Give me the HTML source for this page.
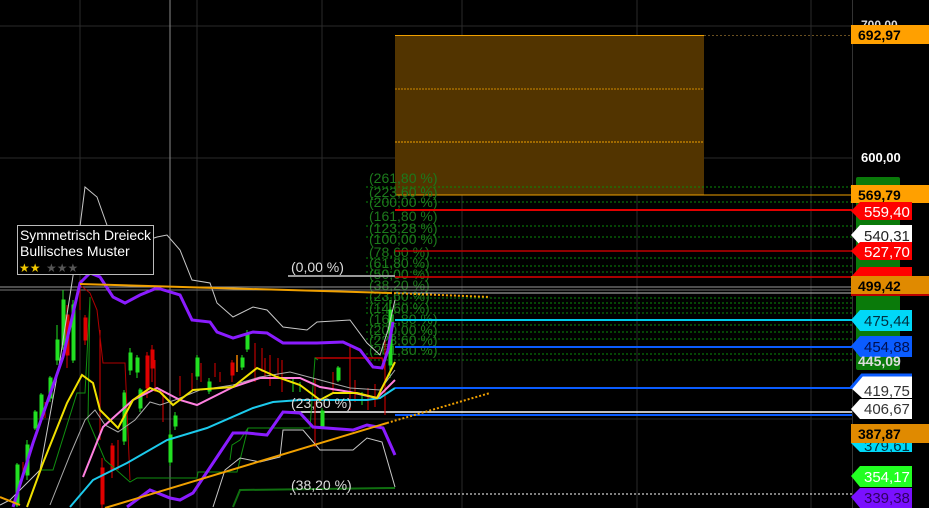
<!DOCTYPE html>
<html><head><meta charset="utf-8"><style>
html,body{margin:0;padding:0;background:#000;overflow:hidden}
svg{display:block}
text{font-family:"Liberation Sans",sans-serif}
</style></head><body>
<svg width="929" height="508" viewBox="0 0 929 508" xmlns="http://www.w3.org/2000/svg">
<rect width="929" height="508" fill="#000"/>
<g stroke="#2a2a2a" stroke-width="1">
<line x1="80" y1="0" x2="80" y2="508"/><line x1="197" y1="0" x2="197" y2="508"/>
<line x1="322" y1="0" x2="322" y2="508"/><line x1="462" y1="0" x2="462" y2="508"/>
<line x1="637" y1="0" x2="637" y2="508"/><line x1="811" y1="0" x2="811" y2="508"/>
<line x1="0" y1="26" x2="852" y2="26"/><line x1="0" y1="158" x2="852" y2="158"/>
<line x1="0" y1="419" x2="852" y2="419"/>
</g>
<line x1="170" y1="0" x2="170" y2="508" stroke="#8a8a8a"/>
<line x1="852.5" y1="0" x2="852.5" y2="508" stroke="#333"/>
<rect x="395" y="35" width="309" height="160" fill="#523400"/>
<line x1="395" y1="35.5" x2="704" y2="35.5" stroke="#f0a000"/>
<line x1="704" y1="35.5" x2="852" y2="35.5" stroke="#6a5020" stroke-dasharray="2,2"/>
<line x1="395" y1="89" x2="704" y2="89" stroke="#d08a00" stroke-dasharray="2,1"/>
<line x1="395" y1="142" x2="704" y2="142" stroke="#f0a000" stroke-dasharray="2,1"/>
<line x1="395" y1="195" x2="852" y2="195" stroke="#f0a000" stroke-width="1"/>
<g stroke="#0a8a0a" stroke-dasharray="2,2">
<line x1="366" y1="187" x2="852" y2="187"/><line x1="366" y1="202" x2="852" y2="202"/>
<line x1="366" y1="226" x2="852" y2="226"/><line x1="366" y1="237" x2="852" y2="237"/>
<line x1="366" y1="258" x2="852" y2="258"/><line x1="366" y1="266" x2="852" y2="266"/>
<line x1="366" y1="272" x2="852" y2="272"/><line x1="366" y1="298" x2="852" y2="298"/>
<line x1="366" y1="303" x2="852" y2="303"/><line x1="366" y1="308" x2="852" y2="308"/>
<line x1="366" y1="313" x2="852" y2="313"/><line x1="366" y1="325" x2="852" y2="325"/>
<line x1="366" y1="332" x2="852" y2="332"/><line x1="366" y1="339" x2="852" y2="339"/>
<line x1="366" y1="354" x2="852" y2="354"/><line x1="366" y1="360" x2="852" y2="360"/>
</g>
<g font-size="14" fill="#1c7a1c">
<text x="369" y="183">(261,80 %)</text><text x="369" y="197">(223,60 %)</text>
<text x="369" y="207">(200,00 %)</text><text x="369" y="221">(161,80 %)</text>
<text x="369" y="233">(123,28 %)</text><text x="369" y="244">(100,00 %)</text>
<text x="369" y="257">(78,60 %)</text><text x="369" y="268">(61,80 %)</text>
<text x="369" y="279">(50,00 %)</text><text x="369" y="290">(38,20 %)</text>
<text x="369" y="301">(23,60 %)</text><text x="369" y="313">(14,60 %)</text>
<text x="369" y="324">(161,80 %)</text><text x="369" y="335">(200,00 %)</text>
<text x="369" y="345">(223,60 %)</text><text x="369" y="355">(261,80 %)</text>
</g>
<line x1="395" y1="210" x2="852" y2="210" stroke="#e00000" stroke-width="2"/>
<line x1="395" y1="251" x2="852" y2="251" stroke="#c00000" stroke-width="1.5"/>
<line x1="395" y1="277" x2="852" y2="277" stroke="#e00000" stroke-width="1.5"/>
<line x1="290" y1="276" x2="395" y2="276" stroke="#888" stroke-width="1"/>
<line x1="0" y1="287" x2="852" y2="287" stroke="#999" stroke-width="1"/>
<line x1="0" y1="290" x2="852" y2="290" stroke="#777" stroke-width="1"/>
<line x1="395" y1="293" x2="852" y2="293" stroke="#bbb" stroke-width="1"/>
<line x1="395" y1="320" x2="852" y2="320" stroke="#00c8e8" stroke-width="2"/>
<line x1="395" y1="347" x2="852" y2="347" stroke="#0a5cff" stroke-width="2"/>
<line x1="395" y1="388" x2="852" y2="388" stroke="#0a5cff" stroke-width="2"/>
<line x1="290" y1="412" x2="852" y2="412" stroke="#fff" stroke-width="1.5"/>
<line x1="395" y1="415" x2="852" y2="415" stroke="#0a5cff" stroke-width="2"/>
<line x1="290" y1="494" x2="852" y2="494" stroke="#fff" stroke-dasharray="2,2"/>
<line x1="288" y1="276" x2="395" y2="276" stroke="#999" stroke-width="2"/>
<g stroke-width="1">
<g stroke="#22e022" fill="#22e022">
<line x1="17" y1="463" x2="17" y2="507"/><rect x="16" y="465" width="3" height="40"/>
<line x1="27" y1="440" x2="27" y2="480"/><rect x="26" y="445" width="3" height="30"/>
<line x1="35" y1="410" x2="35" y2="430"/><rect x="34" y="412" width="3" height="16"/>
<line x1="41" y1="393" x2="41" y2="422"/><rect x="40" y="395" width="3" height="24"/>
<line x1="50" y1="376" x2="50" y2="402"/><rect x="49" y="378" width="3" height="20"/>
<line x1="57" y1="325" x2="57" y2="365"/><rect x="56" y="340" width="3" height="20"/>
<line x1="63" y1="290" x2="63" y2="350"/><rect x="62" y="300" width="3" height="45"/>
<line x1="73" y1="300" x2="73" y2="363"/><rect x="72" y="305" width="3" height="55"/>
<line x1="124" y1="390" x2="124" y2="445"/><rect x="123" y="393" width="3" height="48"/>
<line x1="130" y1="348" x2="130" y2="375"/><rect x="129" y="353" width="3" height="17"/>
<line x1="137" y1="355" x2="137" y2="378"/><rect x="136" y="358" width="3" height="14"/>
<line x1="140" y1="388" x2="140" y2="412"/><rect x="139" y="390" width="3" height="18"/>
<line x1="170" y1="430" x2="170" y2="466"/><rect x="169" y="435" width="3" height="27"/>
<line x1="175" y1="412" x2="175" y2="430"/><rect x="174" y="416" width="3" height="10"/>
<line x1="197" y1="355" x2="197" y2="380"/><rect x="196" y="358" width="3" height="18"/>
<line x1="209" y1="378" x2="209" y2="394"/><rect x="208" y="382" width="3" height="9"/>
<line x1="242" y1="355" x2="242" y2="370"/><rect x="241" y="358" width="3" height="9"/>
<line x1="247" y1="330" x2="247" y2="352"/><rect x="246" y="335" width="3" height="14"/>
<line x1="293" y1="378" x2="293" y2="392"/><line x1="300" y1="382" x2="300" y2="392"/>
<line x1="322" y1="408" x2="322" y2="428"/><rect x="321" y="411" width="3" height="15"/>
<line x1="338" y1="366" x2="338" y2="382"/><rect x="337" y="368" width="3" height="12"/>
<line x1="362" y1="392" x2="362" y2="405"/>
<line x1="390" y1="300" x2="390" y2="378"/><rect x="389" y="310" width="3" height="55"/>
</g>
<g stroke="#e00000" fill="#e00000">
<line x1="23" y1="462" x2="23" y2="478"/><line x1="45" y1="402" x2="45" y2="418"/>
<line x1="67" y1="305" x2="67" y2="368"/><rect x="66" y="315" width="3" height="40"/>
<line x1="80" y1="280" x2="80" y2="310"/><line x1="85" y1="315" x2="85" y2="345"/><rect x="84" y="318" width="3" height="22"/>
<line x1="100" y1="330" x2="100" y2="440"/>
<line x1="102" y1="458" x2="102" y2="508"/><rect x="101" y="468" width="3" height="36"/>
<line x1="112" y1="443" x2="112" y2="478"/><rect x="111" y="446" width="3" height="24"/>
<line x1="118" y1="440" x2="118" y2="470"/>
<line x1="147" y1="352" x2="147" y2="398"/><rect x="146" y="356" width="3" height="32"/>
<line x1="152" y1="345" x2="152" y2="382"/><rect x="151" y="350" width="3" height="18"/>
<line x1="155" y1="360" x2="155" y2="392"/><line x1="163" y1="390" x2="163" y2="422"/>
<line x1="180" y1="376" x2="180" y2="396"/><line x1="192" y1="373" x2="192" y2="390"/>
<line x1="201" y1="363" x2="201" y2="382"/><line x1="215" y1="363" x2="215" y2="377"/>
<line x1="220" y1="372" x2="220" y2="382"/>
<line x1="232" y1="360" x2="232" y2="382"/><rect x="231" y="363" width="3" height="12"/>
<line x1="255" y1="343" x2="255" y2="382"/><line x1="262" y1="348" x2="262" y2="372"/>
<line x1="265" y1="358" x2="265" y2="378"/><line x1="270" y1="355" x2="270" y2="386"/>
<line x1="278" y1="358" x2="278" y2="377"/><line x1="282" y1="360" x2="282" y2="392"/>
<line x1="315" y1="378" x2="315" y2="447"/><line x1="333" y1="372" x2="333" y2="392"/>
<line x1="350" y1="345" x2="350" y2="410"/><line x1="355" y1="380" x2="355" y2="402"/>
<line x1="368" y1="388" x2="368" y2="410"/><line x1="375" y1="384" x2="375" y2="407"/>
<line x1="385" y1="340" x2="385" y2="415"/>
</g>
<line x1="237" y1="355" x2="237" y2="372" stroke="#b06000" stroke-width="2"/>
</g>
<polyline fill="none" stroke="#b00000" stroke-width="1" points="80,285 90,293 97,310 103,363 125,363 130,480"/>
<polyline fill="none" stroke="#c00000" stroke-width="1.5" points="315,358 382,358 385,370"/>
<polyline fill="none" stroke="#109010" stroke-width="1" points="40,470 53,470 77,393 85,393 90,297 88,420 105,460 130,482 137,478 197,478 198,472 237,472 248,428 310,428 315,358 318,360"/>
<polyline fill="none" stroke="#107010" stroke-width="2" points="233,507 240,490 395,488"/>
<polyline fill="none" stroke="#109010" stroke-width="1" points="230,460 232,445 240,440 248,428"/>
<polyline fill="none" stroke="#c8c8c8" stroke-width="1" points="0,505 10,500 40,470 60,360 77,250 85,187 97,197 108,228 127,247 157,237 167,235 180,250 192,280 210,283 217,303 233,317 253,307 267,310 283,327 307,330 317,322 350,320 367,343 380,355 388,330 395,300"/>
<polyline fill="none" stroke="#aaa" stroke-width="1" points="50,505 70,455 85,420 95,410 105,425 118,432 135,420 150,402 160,405 175,400 200,390 233,385 260,377 290,372 320,380 350,388 380,390 395,370"/>
<polyline fill="none" stroke="#c8c8c8" stroke-width="1" points="213,507 225,470 240,458 260,462 280,457 283,430 303,430 320,450 353,450 367,438 382,442 395,487"/>
<polyline fill="none" stroke="#1ccaec" stroke-width="2" points="70,507 93,480 127,463 167,440 207,428 253,408 273,402 300,400 367,400 380,398 395,388"/>
<polyline fill="none" stroke="#ff80e0" stroke-width="2" points="83,477 103,427 133,400 157,388 180,400 197,405 233,387 260,378 300,378 320,387 350,392 377,398 395,380"/>
<polyline fill="none" stroke="#f0e000" stroke-width="2" points="27,507 43,463 67,403 82,375 93,383 100,410 118,428 133,400 150,388 160,392 173,405 193,390 233,387 257,368 277,377 300,385 320,400 333,393 357,393 377,398 395,362"/>
<polyline fill="none" stroke="#8a1cff" stroke-width="3" points="13,507 33,443 63,357 80,283 90,273 100,277 113,297 125,303 140,295 157,288 180,295 192,320 210,322 217,332 233,338 253,332 267,333 283,343 317,343 343,342 360,350 373,367 382,368 388,350 393,322"/>
<polyline fill="none" stroke="#8a1cff" stroke-width="3" points="127,507 150,490 170,498 180,500 193,493 213,463 233,433 247,433 267,435 283,412 300,413 313,427 353,430 367,425 383,428 395,455"/>
<line x1="80" y1="284" x2="390" y2="293" stroke="#f0a000" stroke-width="2"/>
<line x1="390" y1="293" x2="490" y2="297" stroke="#f0a000" stroke-width="2" stroke-dasharray="2,2"/>
<line x1="105" y1="508" x2="387" y2="423" stroke="#f0a000" stroke-width="2"/>
<line x1="387" y1="423" x2="490" y2="393" stroke="#f0a000" stroke-width="2" stroke-dasharray="2,2"/>
<line x1="0" y1="497" x2="20" y2="505" stroke="#f0a000" stroke-width="2"/>
<text x="291" y="272" font-size="14" fill="#ddd">(0,00 %)</text>
<text x="291" y="408" font-size="14" fill="#ddd">(23,60 %)</text>
<text x="291" y="490" font-size="14" fill="#ddd">(38,20 %)</text>
<rect x="17.5" y="225.5" width="136" height="49" fill="#000" stroke="#bbb"/>
<text x="20" y="240" font-size="14" fill="#fff" textLength="131">Symmetrisch Dreieck</text>
<text x="20" y="256" font-size="14" fill="#fff">Bullisches Muster</text>
<text x="19" y="272" font-size="12" fill="#f0c800">★★</text>
<text x="46" y="272" font-size="12" fill="#555">★★★</text>
<text x="861" y="29" font-size="12" font-weight="bold" fill="#ddd">700,00</text>
<text x="861" y="162" font-size="13" font-weight="bold" fill="#fff">600,00</text>
<rect x="856" y="177" width="44" height="193" fill="#0a7a0a" rx="2"/>
<g font-size="14" font-weight="bold">
<rect x="851" y="25" width="78" height="19" fill="#ffa000"/><text x="858" y="40" fill="#000">692,97</text>
<rect x="851" y="185" width="78" height="18" fill="#ffa000"/><text x="858" y="200" fill="#000">569,79</text>
</g>
<g font-size="15">
<polygon points="851,211 860,202 912,202 912,220 860,220" fill="#f00"/><text x="864" y="217" fill="#fff">559,40</text>
<polygon points="851,235 860,225 912,225 912,245 860,245" fill="#fff"/><text x="864" y="241" fill="#222">540,31</text>
<polygon points="851,251 860,242 912,242 912,260 860,260" fill="#f00"/><text x="864" y="257" fill="#fff">527,70</text>
<polygon points="851,277 860,267 912,267 912,277" fill="#f00"/>
<rect x="851" y="276" width="78" height="20" fill="#e08a00"/><rect x="851" y="294" width="78" height="2" fill="#b00"/>
<text x="858" y="291" font-size="14" font-weight="bold" fill="#000">499,42</text>
<polygon points="851,320 860,310 912,310 912,331 860,331" fill="#00d8f8"/><text x="864" y="326" fill="#003040">475,44</text>
<polygon points="851,346 860,336 912,336 912,357 860,357" fill="#0a5cff"/><text x="864" y="352" fill="#001050">454,88</text>
<text x="858" y="366" font-size="14" font-weight="bold" fill="#ddd">445,09</text>
<polygon points="851,388 862,375 912,375 912,398 862,398" fill="#fff"/>
<polyline points="851,388 862,375 912,375" fill="none" stroke="#0a5cff" stroke-width="3"/>
<text x="864" y="396" fill="#333">419,75</text>
<polygon points="851,409 860,399 912,399 912,419 860,419" fill="#fff"/><text x="864" y="414" fill="#333">406,67</text>
<polygon points="851,443 860,434 912,434 912,452 860,452" fill="#00d8f8"/><text x="864" y="451" fill="#003040">379,61</text>
<rect x="851" y="424" width="78" height="19" fill="#e08a00"/><text x="858" y="439" font-size="14" font-weight="bold" fill="#000">387,87</text>
<polygon points="851,476 860,466 912,466 912,487 860,487" fill="#22ff22"/><text x="864" y="482" fill="#fff">354,17</text>
<polygon points="851,497 860,488 912,488 912,508 860,508" fill="#7a10ff"/><text x="864" y="503" fill="#300060">339,38</text>
</g>
</svg>
</body></html>
